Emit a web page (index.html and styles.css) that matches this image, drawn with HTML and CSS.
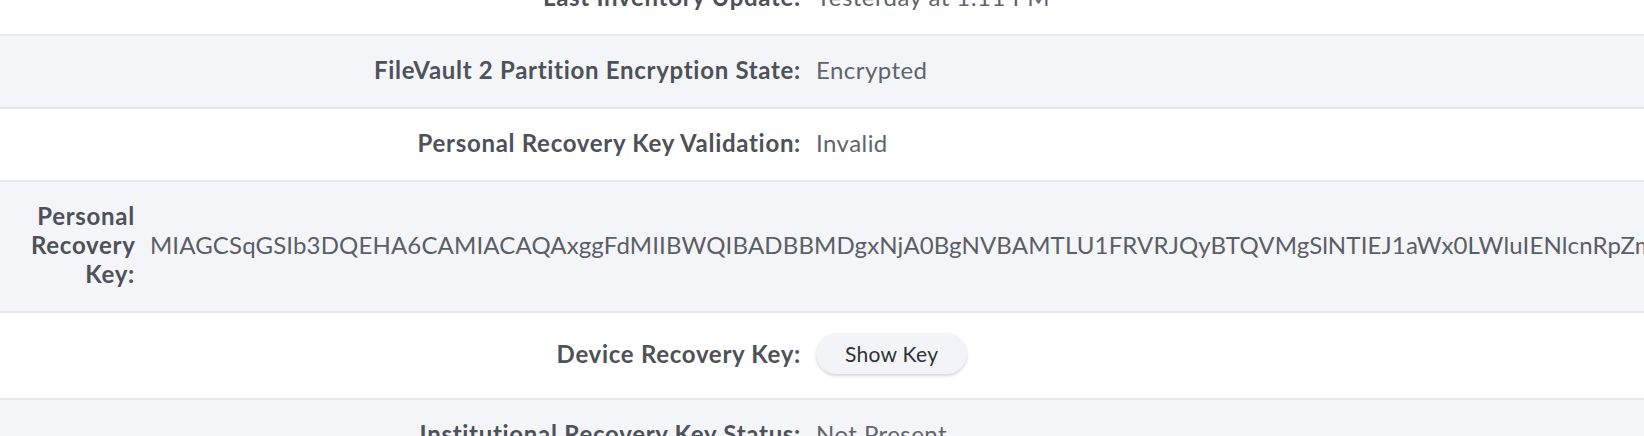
FILE: index.html
```html
<!DOCTYPE html>
<html lang="en">
<head>
<meta charset="utf-8">
<title>FileVault details</title>
<link rel="stylesheet" href="styles.css">
</head>
<body>
<div class="details">
  <div class="row row-white">
    <div class="label">Last Inventory Update:</div>
    <div class="value">Yesterday at 1:11 PM</div>
  </div>
  <div class="row row-gray">
    <div class="label">FileVault 2 Partition Encryption State:</div>
    <div class="value">Encrypted</div>
  </div>
  <div class="row row-white">
    <div class="label">Personal Recovery Key Validation:</div>
    <div class="value">Invalid</div>
  </div>
  <div class="row row-gray">
    <div class="label">Personal Recovery Key:</div>
    <div class="value value-key">MIAGCSqGSIb3DQEHA6CAMIACAQAxggFdMIIBWQIBADBBMDgxNjA0BgNVBAMTLU1FRVRJQyBTQVMgSlNTIEJ1aWx0LWluIENlcnRpZmljYXRlIEF1dGhvcml0eQIFAJ3kAmEwDQYJKoZIhvcNAQEBBQAEggEA</div>
  </div>
  <div class="row row-white">
    <div class="label">Device Recovery Key:</div>
    <div class="value"><button class="btn-show" type="button">Show Key</button></div>
  </div>
  <div class="row row-gray">
    <div class="label">Institutional Recovery Key Status:</div>
    <div class="value">Not Present</div>
  </div>
</div>
</body>
</html>
```
FILE: styles.css
```css
html, body {
  margin: 0;
  padding: 0;
  background: #ffffff;
  overflow: hidden;
}

.details {
  margin-top: -37px;
  font-family: "Lato", "Open Sans", sans-serif;
  font-size: 24px;
  line-height: 29px;
  overflow: hidden;
}

.row {
  display: flex;
  align-items: center;
  padding: 19px 0 23px;
  border-bottom: 2px solid #e7e8eb;
}

.row-white { background: #ffffff; }
.row-gray { background: #f4f5f8; }

.label {
  flex: 0 1 808px;
  box-sizing: border-box;
  padding: 0 7px 0 31px;
  text-align: right;
  font-weight: 700;
  letter-spacing: 0.7px;
  color: #4d5158;
}

.value {
  flex: 1 0 auto;
  padding-left: 8px;
  color: #60646b;
  letter-spacing: 0.45px;
  white-space: nowrap;
}

.value-key {
  color: #5a5e65;
  letter-spacing: 0.15px;
}

.btn-show {
  display: inline-block;
  height: 41px;
  margin: 1px 0;
  padding: 0 29px;
  border: none;
  border-radius: 21px;
  background: #f3f4f7;
  box-shadow: 0 2px 3px rgba(0, 0, 0, 0.16);
  font-family: inherit;
  font-size: 21px;
  letter-spacing: 0.3px;
  color: #2e3136;
  vertical-align: middle;
}
```
